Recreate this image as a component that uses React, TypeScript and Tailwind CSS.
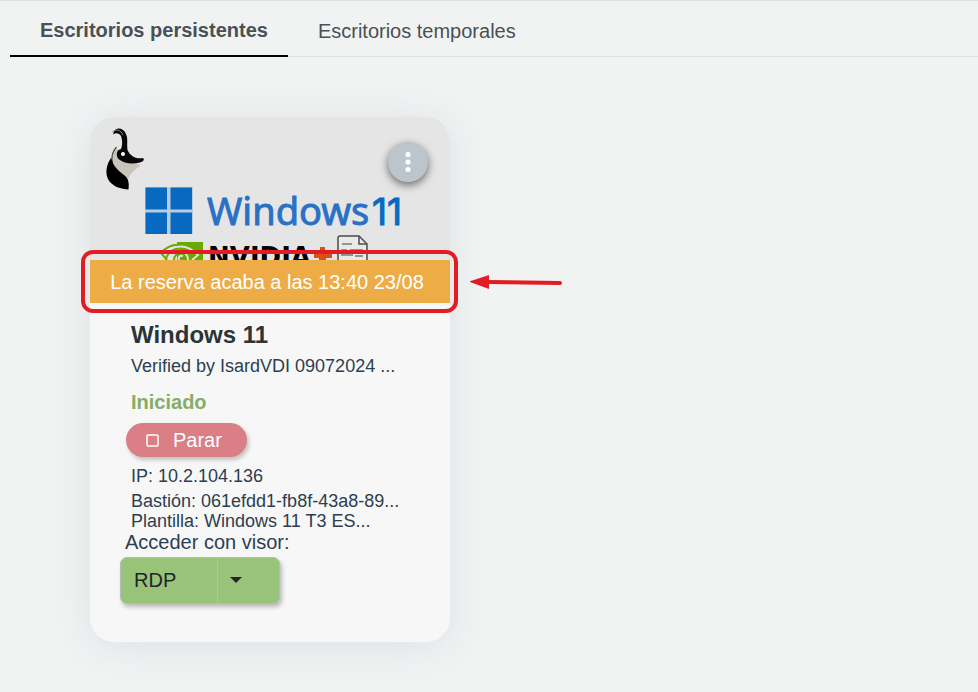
import { useState } from "react";

const TABS = [
  { id: "persistent", label: "Escritorios persistentes" },
  { id: "temporary", label: "Escritorios temporales" },
];

const desktop = {
  name: "Windows 11",
  description: "Verified by IsardVDI 09072024 ...",
  status: "Iniciado",
  booking: "La reserva acaba a las 13:40 23/08",
  ip: "10.2.104.136",
  bastion: "061efdd1-fb8f-43a8-89...",
  template: "Windows 11 T3 ES...",
  viewer: "RDP",
};

function DesktopCover() {
  return (
    <svg viewBox="0 0 360 143" className="block w-full" role="img" aria-label="Windows 11, NVIDIA">
      {/* bird */}
      <path d="M27 31C21 36 20 44 23 51C27 57 33 58 38 63C40 56 45 53 51 48L40 45L29 36Z" fill="#c9c5bb" />
      <path d="M26.500 30C22 35 21 40 22.500 46" fill="none" stroke="#4b4a47" strokeWidth="1.200" />
      <path d="M21 41C16 48 15 57 18.500 63C23 70 31 72 38.500 72.500C39.500 65 38 61 34 58C27 53 23 48 21 41Z" fill="#000" />
      <path d="M24 14C27 10 33 11 35.500 16C38.500 21 36.500 27 37.500 33C40 39 46 42.500 53 41C54.500 42 54 44.500 50 45.500C42 47.500 34 46.500 28.500 42C26 39 26.500 35 28.500 33L31 32C33 27 32 22 31 19C29 16 26 15.500 23 17.500Z" fill="#080808" />
      <path d="M22 15C26 11.500 31 13 33 18" fill="none" stroke="#9e9c96" strokeWidth="0.900" />
      <circle cx="33" cy="37" r="2" fill="#fff" />

      {/* windows logo */}
      <rect x="55" y="70" width="48" height="47" fill="#b9cde1" />
      <path d="M55.500 70.500H77V92.500H55.500ZM80.500 70.500H102V92.500H80.500ZM55.500 95.500H77V117H55.500ZM80.500 95.500H102V117H80.500Z" fill="#0869c1" />
      <text x="117" y="108" fontSize="38" fill="#2a70c5" stroke="#2a70c5" strokeWidth="0.900" className="font-['Noto_Sans',sans-serif]">
        Windows
      </text>
      <text x="282" y="108" fontSize="37" fill="#0869c1" stroke="#0869c1" strokeWidth="1" className="font-['Inter',sans-serif]">
        11
      </text>

      {/* gpu logo */}
      <path d="M87 125H113V143H87Z" fill="#69aa00" />
      <path d="M71 136C77 129 86 126 96 129M76 143C77 134 86 130 94 132C100 134 104 137 107 141M84 143C84 137 91 134 96 138L101 143M71 136L77 143" fill="none" stroke="#69aa00" strokeWidth="2" />
      <path d="M87 130C96 128 103 133 108 138L102 143M87 134C93 133 98 137 98 143M89 143C88 140 90 138 93 139" fill="none" stroke="#dfe7d3" strokeWidth="2" />
      <text x="118" y="149" fontSize="26" fontWeight="700" fill="#000" className="font-['DejaVu_Sans',sans-serif]">
        NVIDIA
      </text>
      <path d="M230 130H235V136H242V141H236V143H229V141H224V136H230Z" fill="#d85118" />

      {/* document */}
      <path d="M248 143V121Q248 119 250 119H269L277 127V143" fill="#e9e9e9" stroke="#4b4b4b" strokeWidth="1.500" />
      <path d="M269 119V127H277" fill="none" stroke="#4b4b4b" strokeWidth="1.500" />
      <path d="M252 127H262M251 133H257M260 133H273M251 138H263M265 139H273" fill="none" stroke="#777" strokeWidth="1.500" />
    </svg>
  );
}

function BookingNotice({ text }: { text: string }) {
  return (
    <div className="relative">
      <div className="bg-[#eeac47] pt-px pr-[6px] text-center text-[20px] leading-[42px] whitespace-nowrap text-white">{text}</div>
      {/* highlight frame and pointer */}
      <div className="pointer-events-none absolute -top-[10px] -right-2 -bottom-[10px] -left-[9px] rounded-[12px] border-4 border-[#e31b23]" />
      <svg width="94" height="20" viewBox="0 0 94 20" className="pointer-events-none absolute top-3 left-full ml-5" aria-hidden>
        <path d="M16 10L90 11" stroke="#e31b23" strokeWidth="4" strokeLinecap="round" />
        <path d="M-1 9.500L19 3V17Z" fill="#e31b23" />
      </svg>
    </div>
  );
}

function DesktopCard() {
  return (
    <article className="w-[360px] rounded-[24px] bg-[#f7f7f7] shadow-[0_4px_36px_rgba(176,190,197,0.32)]">
      <div className="relative rounded-t-[24px] bg-[#e5e5e5]">
        <DesktopCover />
        <button
          aria-label="Opciones"
          className="absolute top-[25px] right-[22px] flex size-10 items-center justify-center rounded-full bg-[#bdc5cc] shadow-[0_3px_8px_rgba(0,0,0,0.55)]"
        >
          <svg width="6" height="22" viewBox="0 0 6 22" fill="#fff" aria-hidden>
            <circle cx="3" cy="3.500" r="2.600" />
            <circle cx="3" cy="11" r="2.600" />
            <circle cx="3" cy="18.500" r="2.600" />
          </svg>
        </button>
      </div>

      <BookingNotice text={desktop.booking} />

      <div className="flex flex-col items-start pt-[18px] pb-[38px] pl-[30px] text-[18px] leading-5 text-[#2c3e50]">
        <div className="flex flex-col items-start pl-[11px]">
          <h2 className="text-[24px] leading-7 font-bold text-[#2b3436]">{desktop.name}</h2>
          <p className="mt-[7px]">{desktop.description}</p>
          <p className="mt-[14px] text-[20px] leading-6 font-bold text-[#86ad65]">{desktop.status}</p>
        </div>
        <button className="mt-[9px] ml-[6px] flex h-[34px] w-[121px] items-center gap-[14px] rounded-full bg-[#d97f85] pl-5 text-[20px] text-white shadow-[2px_3px_4px_rgba(0,0,0,0.22)]">
          <svg width="13" height="13" viewBox="0 0 13 13" fill="none" stroke="#fff" strokeWidth="1.500" aria-hidden>
            <rect x="1" y="1" width="11" height="11" rx="1" />
          </svg>
          Parar
        </button>
        <div className="mt-[9px] pl-[11px]">
          <p>IP: {desktop.ip}</p>
          <p className="mt-[5px]">Bastión: {desktop.bastion}</p>
          <p>Plantilla: {desktop.template}</p>
        </div>
        <p className="pl-[5px] text-[20px] leading-[22px]">Acceder con visor:</p>
        <div className="mt-1 flex h-[47px] w-40 rounded-[7px] border border-[#b1bfba] bg-[#98c379] text-[20px] text-[#212529] shadow-[2px_3px_4px_rgba(0,0,0,0.25)]">
          <button className="w-[97px] border-r border-[#b1bfba] pb-[2px] pl-[13px] text-left">{desktop.viewer}</button>
          <button aria-label="Elegir visor" className="flex flex-1 items-center pb-[2px] pl-3">
            <svg width="12" height="6" viewBox="0 0 12 6" fill="#212529" aria-hidden>
              <path d="M0 0H12L6 6Z" />
            </svg>
          </button>
        </div>
      </div>
    </article>
  );
}

export default function App() {
  const [active, setActive] = useState("persistent");

  return (
    <div className="min-h-screen overflow-x-hidden border-t border-[#dddfdf] bg-[#f1f3f3] font-['Liberation_Sans',Arial,sans-serif]">
      <nav className="ml-[10px] flex border-b border-[#dee2e6]">
        {TABS.map(t => (
          <button
            key={t.id}
            onClick={() => setActive(t.id)}
            className={`-mb-px h-14 border-b-2 pr-5 pl-[30px] text-[20px] whitespace-nowrap text-[#495057] ${t.id === active ? "border-black pt-1 font-bold" : "border-transparent pt-[6px]"}`}
          >
            {t.label}
          </button>
        ))}
      </nav>
      <main className="px-[90px] pt-[60px] pb-[50px]">
        <DesktopCard />
      </main>
    </div>
  );
}
